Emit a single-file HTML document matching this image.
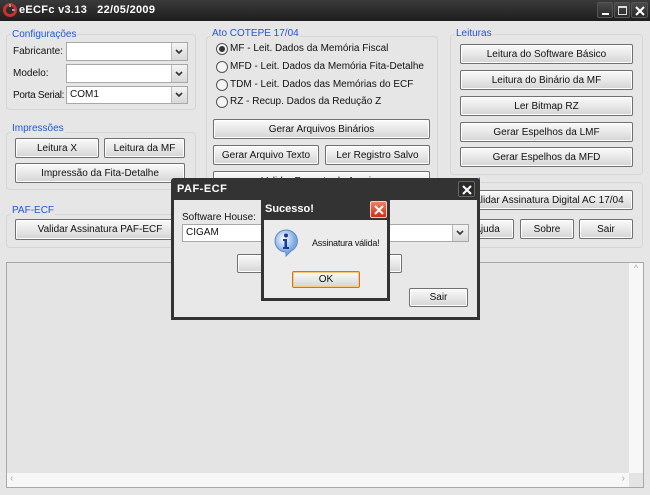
<!DOCTYPE html>
<html><head><meta charset="utf-8"><style>
*{box-sizing:border-box;margin:0;padding:0}
body{width:650px;height:495px;background:#e6e6e6;font-family:"Liberation Sans",sans-serif;font-size:10px;color:#111;position:relative;overflow:hidden}
.a{position:absolute}
.tb{left:0;top:0;width:650px;height:21px;background:linear-gradient(#3a3a3a,#1e1e1e);color:#fff;font-weight:bold;font-size:11px}
.grp{position:absolute;border:1px solid #d6d6d6;border-radius:4px}
.gl{position:absolute;color:#2256d8;background:#e6e6e6;padding:0 1px;font-size:10px;line-height:11px}
.btn{position:absolute;border:1px solid #707070;border-radius:2px;background:linear-gradient(#fafafa,#e8e8e8 50%,#d4d4d4);text-align:center;font-size:10px;display:flex;align-items:center;justify-content:center;box-shadow:inset 0 0 0 1px #fff;white-space:nowrap;overflow:hidden}
.cb{position:absolute;background:#fff;border:1px solid #a8a8a8;font-size:10px;padding-left:3px;line-height:16px}
.cb:after{content:"";position:absolute;right:0;top:0;width:15px;height:100%;background:linear-gradient(#f4f4f4,#d8d8d8);border-left:1px solid #bbb}
.cb svg{position:absolute;right:4px;top:50%;margin-top:-3px;z-index:2}
.lbl{position:absolute;font-size:10px;white-space:nowrap}
.rd{position:absolute;font-size:10px;padding-left:14px;line-height:12px;white-space:nowrap}
.rd:before{content:"";position:absolute;left:0;top:0;width:10px;height:10px;border:1px solid #555;border-radius:50%;background:#f4f4f4}
.rd.on:after{content:"";position:absolute;left:3px;top:3px;width:6px;height:6px;border-radius:50%;background:#333}
.wb{position:absolute;top:2px;width:16px;height:16px;border:1px solid #555;border-radius:2px;background:linear-gradient(#4a4a4a,#2a2a2a)}
</style></head><body>
<div class="a tb">
<svg class="a" style="left:3px;top:3px" width="14" height="14" viewBox="0 0 14 14"><circle cx="7" cy="7" r="5.5" fill="none" stroke="#c8312c" stroke-width="3"/><path d="M7 1v3M12 7h-3" stroke="#999" stroke-width="2"/></svg>
<div class="a" style="left:19px;top:4px;letter-spacing:.3px">eECFc v3.13&nbsp;&nbsp;&nbsp;22/05/2009</div>
<div class="wb" style="left:597px"><div class="a" style="left:4px;top:10px;width:7px;height:2px;background:#fff"></div></div>
<div class="wb" style="left:614px"><div class="a" style="left:3px;top:3px;width:9px;height:9px;border:1px solid #ddd;border-top-width:2px"></div></div>
<div class="wb" style="left:631px;width:17px"><svg class="a" style="left:3px;top:3px" width="10" height="10"><path d="M1 1L9 9M9 1L1 9" stroke="#fff" stroke-width="2"/></svg></div>
</div>

<div class="grp" style="left:6px;top:34px;width:190px;height:76px"></div><div class="gl" style="left:11px;top:29px">Configurações</div>
<div class="lbl" style="left:13px;top:46px">Fabricante:</div><div class="cb" style="left:66px;top:42px;width:122px;height:19px"><svg width="8" height="6"><path d="M1 1l3 3 3-3" fill="none" stroke="#333" stroke-width="1.6"/></svg></div>
<div class="lbl" style="left:13px;top:68px">Modelo:</div><div class="cb" style="left:66px;top:64px;width:122px;height:19px"><svg width="8" height="6"><path d="M1 1l3 3 3-3" fill="none" stroke="#333" stroke-width="1.6"/></svg></div>
<div class="lbl" style="left:13px;top:90px;letter-spacing:-.3px">Porta Serial:</div><div class="cb" style="left:66px;top:86px;width:122px;height:18px">COM1<svg width="8" height="6"><path d="M1 1l3 3 3-3" fill="none" stroke="#333" stroke-width="1.6"/></svg></div>

<div class="grp" style="left:6px;top:132px;width:190px;height:58px"></div><div class="gl" style="left:11px;top:123px">Impressões</div>
<div class="btn" style="left:15px;top:138px;width:84px;height:20px">Leitura X</div>
<div class="btn" style="left:104px;top:138px;width:81px;height:20px">Leitura da MF</div>
<div class="btn" style="left:15px;top:163px;width:170px;height:20px">Impressão da Fita-Detalhe</div>

<div class="grp" style="left:6px;top:214px;width:190px;height:34px"></div><div class="gl" style="left:11px;top:205px">PAF-ECF</div>
<div class="btn" style="left:15px;top:219px;width:170px;height:21px">Validar Assinatura PAF-ECF</div>

<div class="grp" style="left:206px;top:36px;width:232px;height:145px"></div><div class="gl" style="left:211px;top:28px">Ato COTEPE 17/04</div>
<div class="rd on" style="left:216px;top:43px">MF - Leit. Dados da Memória Fiscal</div>
<div class="rd" style="left:216px;top:61px">MFD - Leit. Dados da Memória Fita-Detalhe</div>
<div class="rd" style="left:216px;top:79px">TDM - Leit. Dados das Memórias do ECF</div>
<div class="rd" style="left:216px;top:96px">RZ - Recup. Dados da Redução Z</div>
<div class="btn" style="left:213px;top:119px;width:217px;height:20px">Gerar Arquivos Binários</div>
<div class="btn" style="left:213px;top:145px;width:106px;height:20px">Gerar Arquivo Texto</div>
<div class="btn" style="left:325px;top:145px;width:105px;height:20px">Ler Registro Salvo</div>
<div class="btn" style="left:213px;top:171px;width:217px;height:20px">Validar Formato do Arquivo</div>

<div class="grp" style="left:450px;top:34px;width:193px;height:141px"></div><div class="gl" style="left:455px;top:28px">Leituras</div>
<div class="btn" style="left:460px;top:44px;width:173px;height:20px">Leitura do Software Básico</div>
<div class="btn" style="left:460px;top:70px;width:173px;height:20px">Leitura do Binário da MF</div>
<div class="btn" style="left:460px;top:96px;width:173px;height:20px">Ler Bitmap RZ</div>
<div class="btn" style="left:460px;top:122px;width:173px;height:20px">Gerar Espelhos da LMF</div>
<div class="btn" style="left:460px;top:147px;width:173px;height:20px">Gerar Espelhos da MFD</div>
<div class="grp" style="left:450px;top:182px;width:193px;height:66px"></div><div class="gl" style="left:455px;top:177px">Geral</div>
<div class="btn" style="left:460px;top:190px;width:173px;height:20px">Validar Assinatura Digital AC 17/04</div>
<div class="btn" style="left:460px;top:219px;width:54px;height:20px">Ajuda</div>
<div class="btn" style="left:520px;top:219px;width:54px;height:20px">Sobre</div>
<div class="btn" style="left:579px;top:219px;width:54px;height:20px">Sair</div>

<div class="a" style="left:6px;top:262px;width:638px;height:226px;border:1px solid #a8a8a8;background:#e4e4e4"></div>
<div class="a" style="left:629px;top:263px;width:14px;height:210px;background:#f7f7f7;color:#9ab;font-size:9px;text-align:center">^</div>
<div class="a" style="left:7px;top:473px;width:622px;height:14px;background:#f7f7f7;color:#9ab;font-size:10px;padding-left:3px">‹<span style="float:right;margin-right:4px">›</span></div>

<!-- PAF-ECF dialog -->
<div class="a" style="left:171px;top:178px;width:309px;height:142px;background:#333;border-radius:3px 3px 0 0">
<div class="a" style="left:6px;top:5px;color:#fff;font-weight:bold;font-size:11px;letter-spacing:.5px">PAF-ECF</div>
<div class="a" style="left:287px;top:3px;width:17px;height:16px;border:1px solid #666;border-radius:2px;background:#2a2a2a"><svg class="a" style="left:3px;top:3px" width="10" height="10"><path d="M1 1L9 9M9 1L1 9" stroke="#fff" stroke-width="2"/></svg></div>
<div class="a" style="left:3px;top:22px;width:303px;height:117px;background:#e8e8e8">
<div class="lbl" style="left:8px;top:12px">Software House:</div>
<div class="cb" style="left:8px;top:24px;width:287px;height:18px">CIGAM<svg width="8" height="6"><path d="M1 1l3 3 3-3" fill="none" stroke="#333" stroke-width="1.6"/></svg></div>
<div class="btn" style="left:63px;top:54px;width:165px;height:19px">Selecionar Arquivo</div>
<div class="btn" style="left:235px;top:88px;width:59px;height:19px">Sair</div>
</div></div>

<!-- Sucesso dialog -->
<div class="a" style="left:261px;top:197px;width:129px;height:104px;background:#333;border-radius:3px 3px 0 0">
<div class="a" style="left:4px;top:6px;color:#fff;font-weight:bold;font-size:11px">Sucesso!</div>
<div class="a" style="left:109px;top:4px;width:17px;height:17px;border:1px solid #fcc;border-radius:2px;background:linear-gradient(#f08060,#d03018)"><svg class="a" style="left:3px;top:3px" width="10" height="10"><path d="M1 1L9 9M9 1L1 9" stroke="#fff" stroke-width="2"/></svg></div>
<div class="a" style="left:3px;top:23px;width:123px;height:78px;background:#ececec;overflow:hidden">
<svg class="a" style="left:9px;top:9px" width="26" height="28" viewBox="0 0 26 28"><defs><radialGradient id="g" cx=".4" cy=".35"><stop offset="0" stop-color="#fff"/><stop offset="1" stop-color="#7aa8e0"/></radialGradient></defs><path d="M13 1a11 11 0 1 0 0 22l0 4 5-5A11 11 0 0 0 13 1z" fill="url(#g)" stroke="#5a8ac8"/><circle cx="13" cy="6.5" r="2" fill="#1a3a9a"/><path d="M10 10h4v8h2v2h-6v-2h1.5v-6H10z" fill="#1a3a9a"/></svg>
<div class="a" style="left:48px;top:18px;font-size:9px;letter-spacing:-.2px;white-space:nowrap">Assinatura válida!</div>
<div class="btn" style="left:28px;top:51px;width:68px;height:17px;border-color:#c8782a;box-shadow:inset 0 0 0 1px #f8c878">OK</div>
</div></div>
</body></html>
